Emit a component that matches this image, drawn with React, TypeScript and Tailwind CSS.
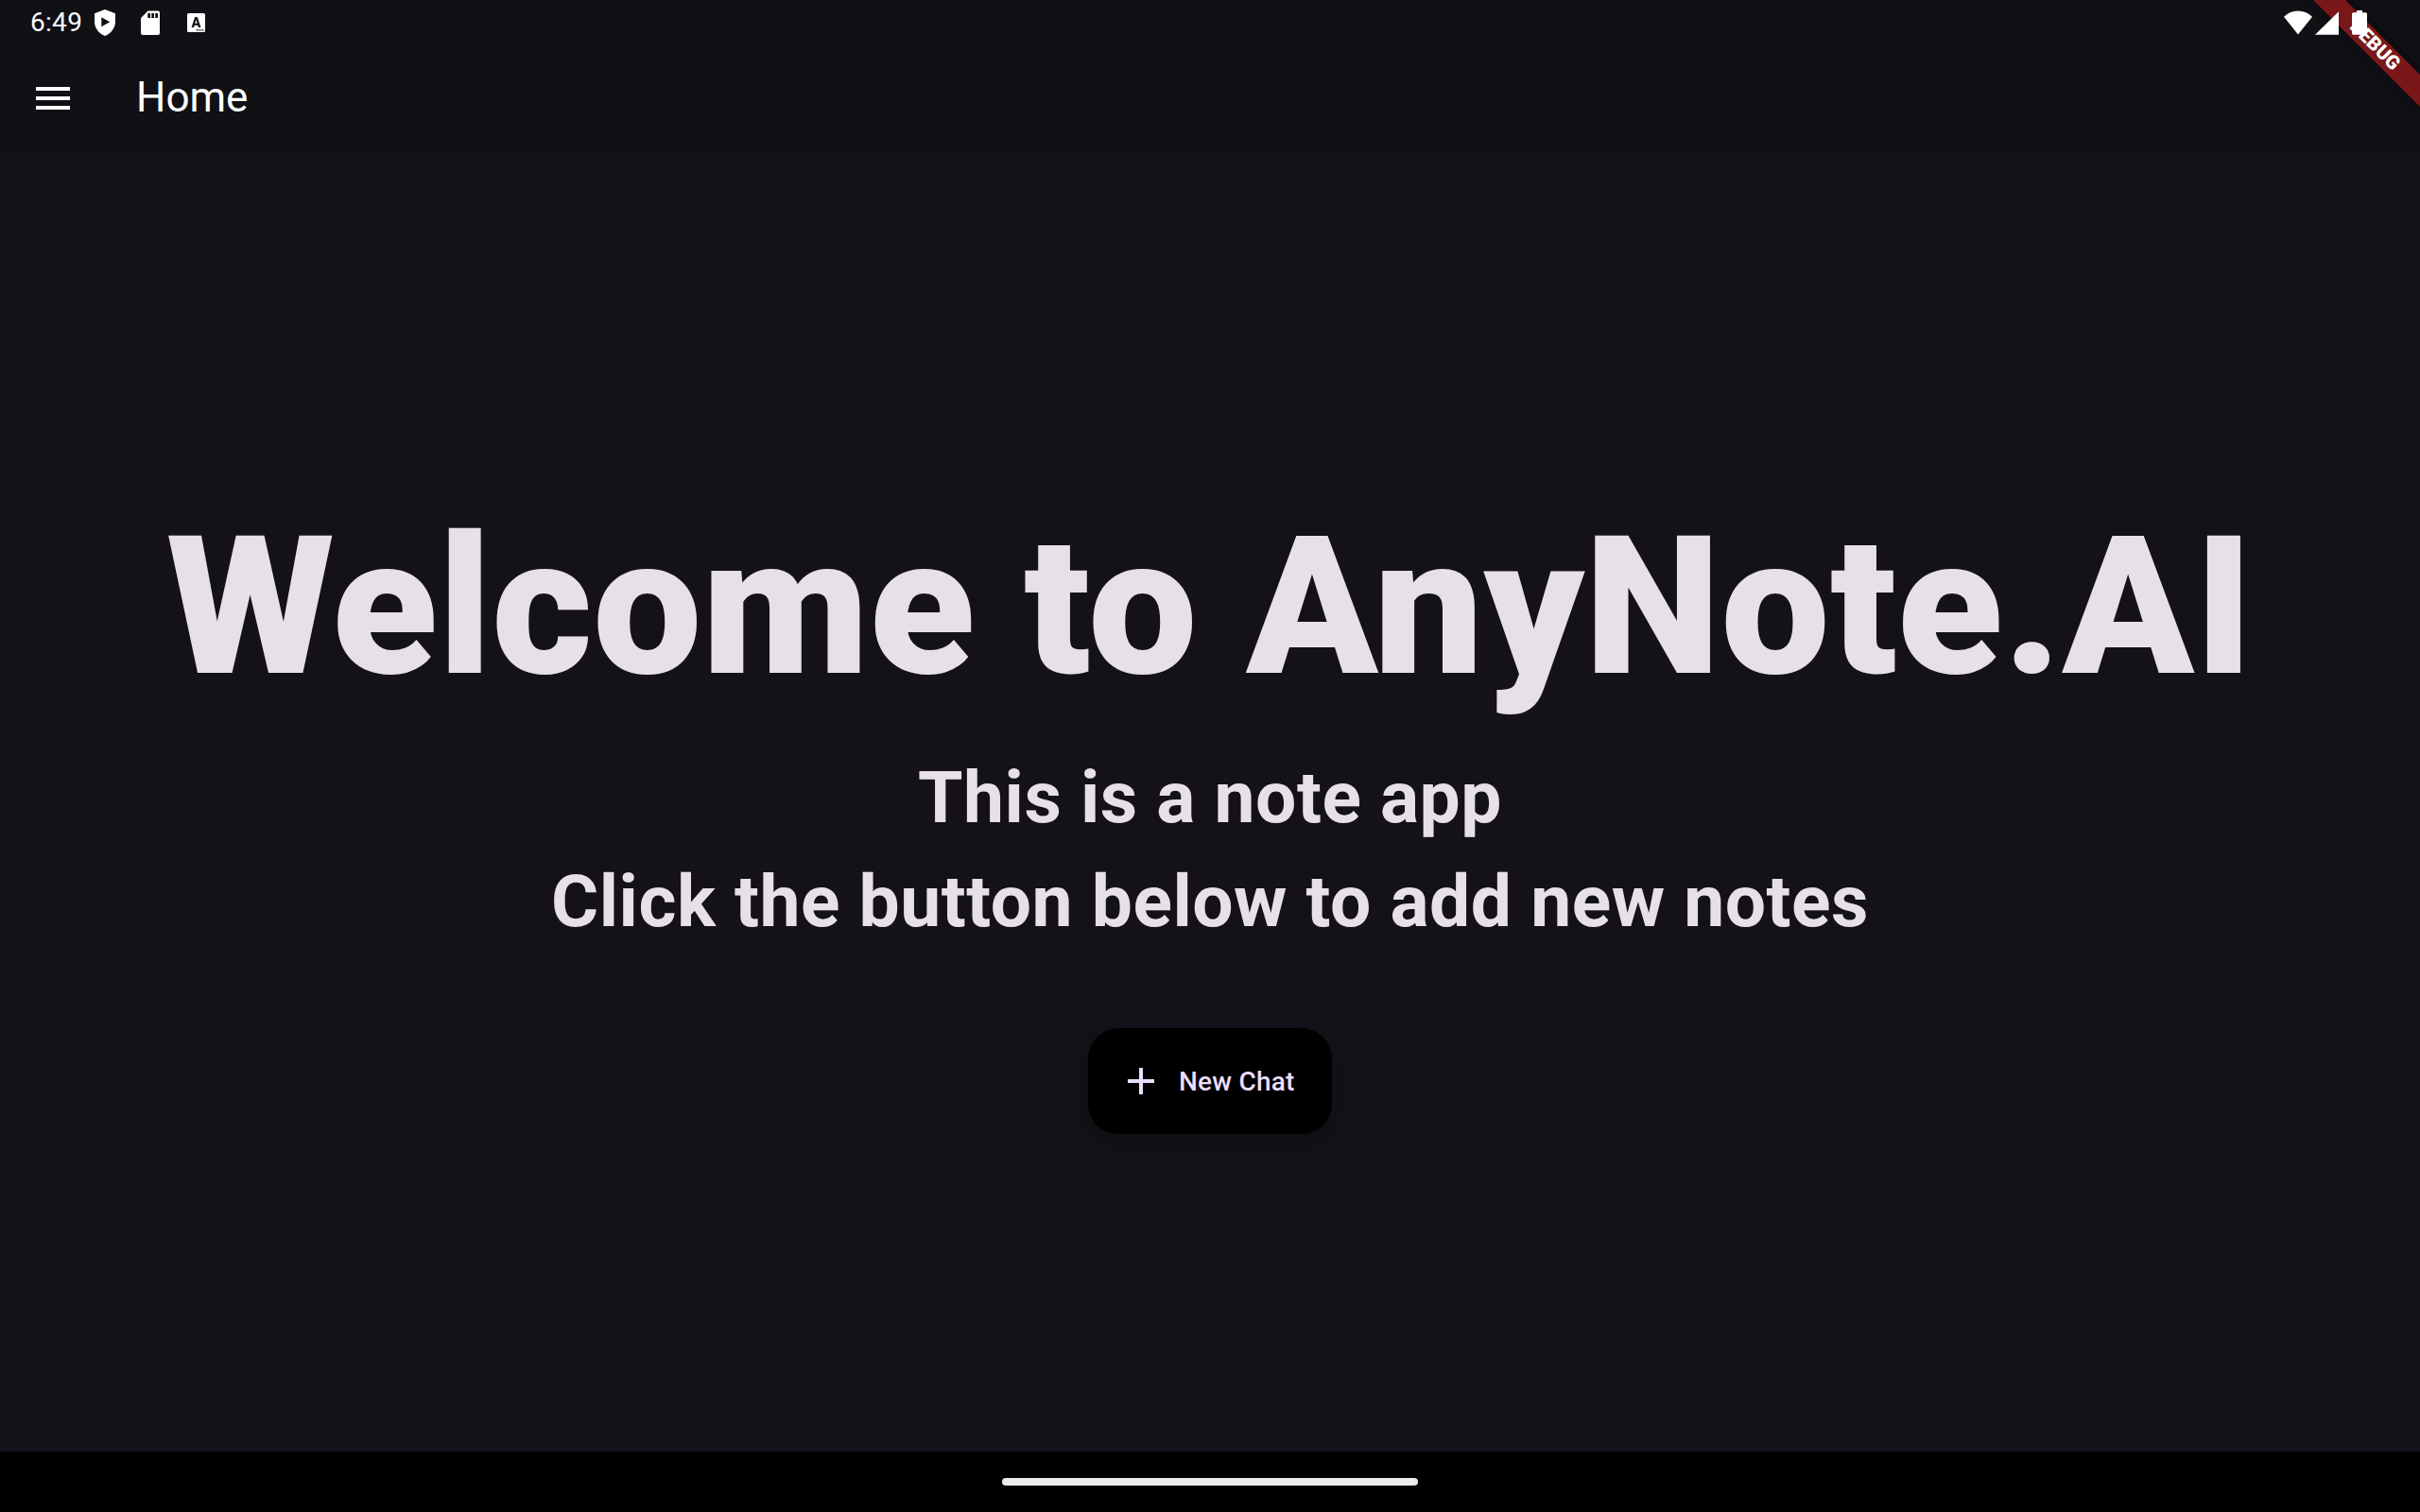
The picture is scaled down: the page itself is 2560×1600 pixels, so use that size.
import { MdAdd, MdMenu } from "react-icons/md";

function StatusBar() {
  return (
    <header className="flex h-12 items-start justify-between">
      <div className="flex h-12 items-center text-white">
        <span className="ml-8 w-[68px] text-[28px] leading-[46px] tracking-[0.3px]">6:49</span>
        <svg className="-mt-px h-7 w-[22px]" viewBox="0 0 22 28" fill="currentColor">
          <path
            fillRule="evenodd"
            d="M11 0 22 4.2V13c0 6.600-4.600 12.500-11 15C4.600 25.500 0 19.600 0 13V4.200ZM7.300 8.200v10L16.200 13.200Z"
          />
        </svg>
        <svg className="ml-[27px] -mt-px h-[26px] w-5" viewBox="0 0 20 26" fill="currentColor">
          <path
            fillRule="evenodd"
            d="M7.500.500H18a2 2 0 0 1 2 2V24a2 2 0 0 1-2 2H2a2 2 0 0 1-2-2V8ZM7.300 3v5H10V3ZM11.300 3v5H14V3ZM15.300 3v5H18V3Z"
          />
        </svg>
        <svg className="ml-[28.5px] h-5 w-[19px]" viewBox="0 0 19 20" fill="currentColor">
          <path
            fillRule="evenodd"
            d="M1.500 0h16A1.500 1.500 0 0 1 19 1.500v17a1.500 1.500 0 0 1-1.500 1.500h-16A1.500 1.500 0 0 1 0 18.500v-17A1.500 1.500 0 0 1 1.500 0ZM8.200 4 4.600 15H7l.8-2.300h3.400L12 15h2.400L10.800 4ZM9.500 6.800 10.700 10.700H8.300ZM9.800 17v1.600h1.700V17ZM12.700 17v1.600h1.700V17ZM15.600 17v1.600h1.700V17Z"
          />
        </svg>
      </div>
      <div className="relative z-10 mr-14 mt-[11px] flex items-start text-white">
        <svg className="h-[26px] w-[30px]" viewBox="0 0 30 26" fill="currentColor">
          <path d="M15 25.500 0 6.800C4.300 2.800 9.400.600 15 .600S25.700 2.800 30 6.800Z" />
        </svg>
        <svg className="ml-[2.5px] h-[26px] w-[25.5px]" viewBox="0 0 25.5 26" fill="currentColor">
          <path d="M25.500.800v25H0Z" />
        </svg>
        <svg className="ml-[14px] h-[26px] w-4" viewBox="0 0 16 26" fill="currentColor">
          <path d="M5 0h6v2.300h3.500A1.500 1.500 0 0 1 16 3.800v20.400a1.500 1.500 0 0 1-1.500 1.500h-13A1.500 1.500 0 0 1 0 24.200V3.800a1.500 1.500 0 0 1 1.500-1.500H5Z" />
        </svg>
      </div>
    </header>
  );
}

function DebugBanner() {
  return (
    <div className="pointer-events-none absolute right-0 top-0 h-[200px] w-[200px] overflow-hidden">
      <div className="absolute left-[52px] top-9 flex h-6 w-[200px] rotate-45 items-center justify-center bg-[#b71c1c]/63 pb-0.5 text-[20.4px] font-black leading-none text-white shadow-[0_0_12px_rgba(0,0,0,0.5)]">
        DEBUG
      </div>
    </div>
  );
}

export default function App() {
  return (
    <div className="relative flex h-[1600px] w-[2560px] flex-col overflow-hidden bg-[#141218] font-[Roboto,sans-serif]">
      <div className="h-40 bg-[#101015]">
        <StatusBar />
        <nav className="flex h-28 items-center text-white">
          <MdMenu className="ml-8 size-12" />
          <h1 className="mb-0.5 ml-16 text-[44px] leading-[56px]">Home</h1>
        </nav>
      </div>
      <main className="flex flex-1 flex-col items-center justify-center whitespace-nowrap text-[#e6e0e9]">
        <h2 className="text-[204.8px] font-black leading-[293px] tracking-[0.5px]">Welcome to AnyNote.AI</h2>
        <p className="text-[76.8px] font-bold leading-[110px] tracking-[0.5px]">This is a note app</p>
        <p className="text-[76.8px] font-bold leading-[110px] tracking-[0.5px]">
          Click the button below to add new notes
        </p>
        <button className="mt-[79px] flex h-28 w-[258px] items-center rounded-[32px] bg-black pl-8 text-[28px] font-medium tracking-[0.2px] text-[#eaddff] shadow-[0_9px_18px_rgba(0,0,0,0.25)]">
          <MdAdd className="size-12" />
          <span className="ml-4 mt-0.5">New Chat</span>
        </button>
      </main>
      <footer className="flex h-16 items-center justify-center bg-black">
        <div className="h-2 w-[440px] rounded-full bg-[#ebebeb]" />
      </footer>
      <DebugBanner />
    </div>
  );
}
